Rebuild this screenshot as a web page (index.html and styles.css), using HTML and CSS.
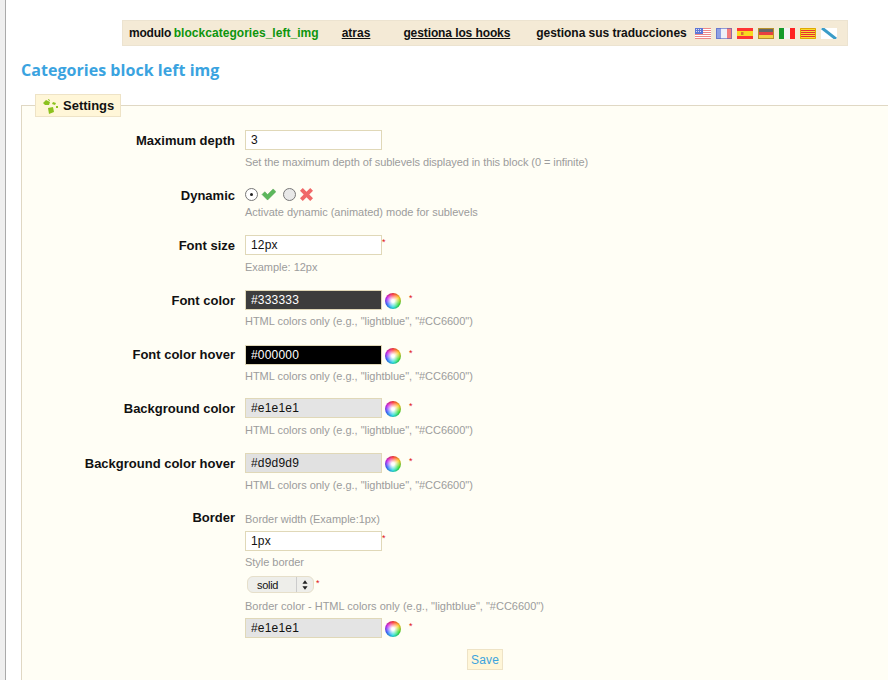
FILE: index.html
```html
<!DOCTYPE html>
<html lang="es">
<head>
<meta charset="utf-8">
<title>Categories block left img</title>
<link rel="stylesheet" href="styles.css">
</head>
<body>
<div class="shell">
  <div class="toolbar">
    <span class="tb-name">modulo <b class="green">blockcategories_left_img</b></span>
    <a class="tb-link tb-back" href="#">atras</a>
    <a class="tb-link tb-hooks" href="#">gestiona los hooks</a>
    <span class="tb-trans">gestiona sus traducciones</span>
    <span class="flags">
      <svg class="flag" viewBox="0 0 16 11"><rect width="16" height="11" fill="#fff"/><path d="M0 .5h16M0 2.5h16M0 4.5h16M0 6.5h16M0 8.5h16M0 10.5h16" stroke="#e88" stroke-width="1"/><rect width="8" height="6" fill="#5f78d8"/><path d="M1 1.5h6M1 3.5h6" stroke="#dde" stroke-dasharray="1 1"/></svg>
      <svg class="flag" viewBox="0 0 16 11"><rect width="16" height="11" fill="#eef0f8"/><rect width="5" height="11" fill="#8ea0e4"/><rect x="11" width="5" height="11" fill="#f47c7c"/><rect x=".5" y=".5" width="15" height="10" fill="none" stroke="#5060c0" stroke-opacity=".6"/></svg>
      <svg class="flag" viewBox="0 0 16 11"><rect width="16" height="11" fill="#f33"/><rect y="3" width="16" height="5" fill="#f8d820"/><rect x="4" y="4" width="2.5" height="3" fill="#d87030"/></svg>
      <svg class="flag" viewBox="0 0 16 11"><rect width="16" height="11" fill="#b8922c"/><rect x="1" y="1" width="14" height="3" fill="#666"/><rect x="1" y="4" width="14" height="3" fill="#e84040"/><rect x="1" y="7" width="14" height="3" fill="#f4d040"/></svg>
      <svg class="flag" viewBox="0 0 16 11"><rect width="16" height="11" fill="#f4f4f4"/><rect width="5" height="11" fill="#149a2a"/><rect x="11" width="5" height="11" fill="#f22"/></svg>
      <svg class="flag" viewBox="0 0 16 11"><rect width="16" height="11" fill="#f8dc30"/><path d="M1 2.5h14M1 4.5h14M1 6.5h14M1 8.5h14" stroke="#e83030"/><path d="M.5 .5h15v10h-15z" fill="none" stroke="#e0a800"/></svg>
      <svg class="flag" viewBox="0 0 16 11"><rect width="16" height="11" fill="#fff"/><path d="M1 0 15 11" stroke="#3a9cc8" stroke-width="3"/></svg>
    </span>
  </div>

  <h2 class="title">Categories block left img</h2>

  <form class="settings">
    <fieldset class="box">
      <legend class="legend">
        <svg class="legend-ico" viewBox="0 0 16 16"><path d="M0 5 3 2l4 2-1 3H2zM5 1l2 1v1L5 2zM10 4l3 1-1 2-3-1zM13 8h2v2h-2zM5 10l5-1 1 5-5 2z" fill="#8cc21e"/></svg>
        Settings
      </legend>

      <div class="row r-depth">
        <label class="lab">Maximum depth</label>
        <div class="field">
          <input class="txt" type="text" value="3">
          <p class="help h-first">Set the maximum depth of sublevels displayed in this block (0 = infinite)</p>
        </div>
      </div>

      <div class="row r-dyn">
        <label class="lab lab-dyn">Dynamic</label>
        <div class="field">
          <div class="radios">
            <span class="radio on"></span>
            <svg class="ri" viewBox="0 0 16 14"><path d="M1 7l3-3 3 3 6-6 3 3-9 9z" fill="#5cb85c" stroke="#4a9a4a" stroke-width=".5"/></svg>
            <span class="radio off"></span>
            <svg class="ri" viewBox="0 0 16 14"><path d="M1 3l3-3 4 4 4-4 3 3-4 4 4 4-3 3-4-4-4 4-3-3 4-4z" fill="#f06868"/></svg>
          </div>
          <p class="help h-dyn">Activate dynamic (animated) mode for sublevels</p>
        </div>
      </div>

      <div class="row r-std">
        <label class="lab">Font size</label>
        <div class="field">
          <div class="line"><input class="txt" type="text" value="12px"><sup class="req">*</sup></div>
          <p class="help">Example: 12px</p>
        </div>
      </div>

      <div class="row r-c1">
        <label class="lab">Font color</label>
        <div class="field">
          <div class="line"><input class="txt c-333" type="text" value="#333333"><span class="wheel"></span><sup class="req rq-c">*</sup></div>
          <p class="help h-c">HTML colors only (e.g., "lightblue", "#CC6600")</p>
        </div>
      </div>

      <div class="row r-c2">
        <label class="lab lab-up">Font color hover</label>
        <div class="field">
          <div class="line"><input class="txt c-000" type="text" value="#000000"><span class="wheel"></span><sup class="req rq-c">*</sup></div>
          <p class="help h-c">HTML colors only (e.g., "lightblue", "#CC6600")</p>
        </div>
      </div>

      <div class="row r-c3">
        <label class="lab">Background color</label>
        <div class="field">
          <div class="line"><input class="txt c-e1" type="text" value="#e1e1e1"><span class="wheel"></span><sup class="req rq-c">*</sup></div>
          <p class="help">HTML colors only (e.g., "lightblue", "#CC6600")</p>
        </div>
      </div>

      <div class="row r-c4">
        <label class="lab">Background color hover</label>
        <div class="field">
          <div class="line"><input class="txt c-d9" type="text" value="#d9d9d9"><span class="wheel"></span><sup class="req rq-c">*</sup></div>
          <p class="help">HTML colors only (e.g., "lightblue", "#CC6600")</p>
        </div>
      </div>

      <div class="row r-border">
        <label class="lab lab-b">Border</label>
        <div class="field">
          <p class="help h-b">Border width (Example:1px)</p>
          <div class="line"><input class="txt" type="text" value="1px"><sup class="req">*</sup></div>
          <p class="help h-b2">Style border</p>
          <div class="line"><span class="sel">solid<span class="sel-arrows"><svg viewBox="0 0 7 11"><path d="M3.5 0 6.5 4h-6zM3.5 11 .5 7h6z" fill="#222"/></svg></span></span><sup class="req rq-s">*</sup></div>
          <p class="help h-b3">Border color - HTML colors only (e.g., "lightblue", "#CC6600")</p>
          <div class="line"><input class="txt c-e1" type="text" value="#e1e1e1"><span class="wheel"></span><sup class="req rq-c">*</sup></div>
        </div>
      </div>

      <div class="actions"><button class="save" type="button">Save</button></div>
    </fieldset>
  </form>
</div>
</body>
</html>
```
FILE: styles.css
```css
html, body { margin: 0; padding: 0; height: 680px; overflow: hidden; background: #fff; }
body { font-family: "Liberation Sans", Arial, sans-serif; font-size: 12px; color: #000; }

.shell {
  box-sizing: border-box;
  height: 680px;
  border-left: 5px solid #efefef;
  box-shadow: inset 1px 0 0 #aaa;
  padding: 20px 0 0 16px;
  overflow: hidden;
}

.toolbar {
  box-sizing: border-box;
  display: flex;
  align-items: center;
  width: 726px;
  height: 26px;
  margin-left: 101px;
  padding-left: 6px;
  background: #f4ead6;
  border: 1px solid #ece3d0;
  font-weight: bold;
  white-space: nowrap;
  color: #111;
}
.toolbar b { font-weight: bold; }
.tb-name { letter-spacing: -.2px; }
.green { color: #0d950d; margin-left: -.6px; letter-spacing: .04px; }
.tb-link { color: #111; text-decoration: underline; }
.tb-back { margin-left: 23px; }
.tb-hooks { margin-left: 33px; letter-spacing: -.1px; }
.tb-trans { margin-left: 26px; letter-spacing: -.04px; }
.flags { display: flex; gap: 5px; margin-left: 8px; }
.flag { width: 16px; height: 11px; display: block; }

.title {
  margin: 13px 0 0;
  font-family: "Open Sans", sans-serif;
  font-size: 16px;
  line-height: 22px;
  font-weight: 700;
  letter-spacing: .04px;
  color: #3aa3e0;
}

.settings { margin: 13px 0 0; }
.box {
  box-sizing: border-box;
  margin: 0;
  width: 900px;
  min-height: 620px;
  padding: 0;
  background: #fffef5;
  border: 1px solid #e0d8c4;
}
.legend {
  box-sizing: border-box;
  display: flex;
  align-items: center;
  gap: 4px;
  margin-left: 13px;
  padding: 0 6px 0 7px;
  height: 23px;
  width: 86px;
  background: #fff6d8;
  border: 1px solid #eee3c6;
  font-weight: bold;
  font-size: 13px;
  color: #111;
}
.legend-ico { width: 16px; height: 16px; flex: none; }

.row { display: grid; grid-template-columns: 213px 1fr; column-gap: 10px; }
.lab { text-align: right; font-weight: bold; font-size: 13px; line-height: 20px; padding-top: 1px; color: #111; }
.lab-dyn { margin-top: -2px; }
.lab-up { padding-top: 0; }
.lab-b { padding-top: 0; line-height: 12px; }
.field { min-width: 0; }
.line { display: flex; align-items: flex-start; }

.txt {
  box-sizing: border-box;
  display: block;
  width: 137px;
  height: 20px;
  margin: 0;
  padding: 0 0 0 5px;
  background: #fff;
  border: 1px solid #e0d8b8;
  font: 12px "Liberation Sans", sans-serif;
  letter-spacing: .2px;
  color: #111;
}
.c-333 { background: #3d3d3d; color: #fff; }
.c-000 { background: #000; color: #fff; }
.c-e1 { background: #e4e4e4; color: #111; }
.c-d9 { background: #e1e1e1; color: #111; }

.help { margin: 0; font-size: 11px; line-height: 13px; letter-spacing: -.03px; color: #9c9c9c; padding-top: 6px; }
.h-first { letter-spacing: -.07px; }
.h-dyn { padding-top: 2px; }
.h-c { padding-top: 5px; }
.h-b { padding: 0; line-height: 14px; margin-bottom: 5px; }
.h-b2 { padding-top: 5px; margin-bottom: 7px; }
.h-b3 { padding-top: 7px; margin-bottom: 5px; letter-spacing: 0; }

.req { color: #e01010; font-size: 9px; line-height: 9px; margin-left: 0; margin-top: 3px; }
.rq-c { margin-left: 8px; margin-top: 4px; }
.rq-s { margin-left: 2px; margin-top: 3px; }

.wheel {
  flex: none;
  width: 16px;
  height: 16px;
  margin: 3px 0 0 3px;
  border-radius: 50%;
  background:
    radial-gradient(circle at 50% 50%, #fff 0 12%, rgba(255,255,255,0) 62%),
    conic-gradient(#f33, #fc2, #3d3, #2dd, #36f, #c2e, #f33);
  box-shadow: inset 0 0 0 1px rgba(90,90,90,.2);
}

.r-depth { margin-top: 13px; }
.r-dyn { margin-top: 18px; }
.r-std { margin-top: 16px; }
.r-c1 { margin-top: 16px; }
.r-c2 { margin-top: 17px; }
.r-c3 { margin-top: 15px; }
.r-c4 { margin-top: 16px; }
.r-border { margin-top: 20px; }

.radios { display: flex; align-items: center; height: 20px; gap: 3px; margin-top: -3px; }
.radio {
  box-sizing: border-box;
  width: 13px;
  height: 13px;
  border-radius: 50%;
  border: 1px solid #777;
  background: #fff;
  position: relative;
}
.radio.on::after {
  content: "";
  position: absolute;
  left: 4px; top: 4px;
  width: 3px; height: 3px;
  border-radius: 50%;
  background: #222;
}
.radio.off { background: #e8e8e8; margin-left: 4px; }
.ri { width: 15px; height: 13px; }

.sel {
  box-sizing: border-box;
  display: flex;
  align-items: center;
  justify-content: space-between;
  width: 67px;
  height: 17px;
  margin-left: 2px;
  padding-left: 9px;
  border-radius: 6px;
  background: #eeeeea;
  border: 1px solid #e6dfca;
  font-size: 11px;
  letter-spacing: -.3px;
  color: #111;
}
.sel-arrows { display: flex; align-items: center; justify-content: center; width: 16px; height: 15px; border-left: 1px solid #ccc; }
.sel-arrows svg { width: 6px; height: 10px; }

.actions { margin-top: 11px; padding-left: 445px; }
.save {
  box-sizing: border-box;
  width: 36px;
  height: 21px;
  padding: 0;
  background: #fff6d8;
  border: 1px solid #eee3c6;
  font: 12px "Liberation Sans", sans-serif;
  letter-spacing: .2px;
  color: #3ba3dd;
}
```
